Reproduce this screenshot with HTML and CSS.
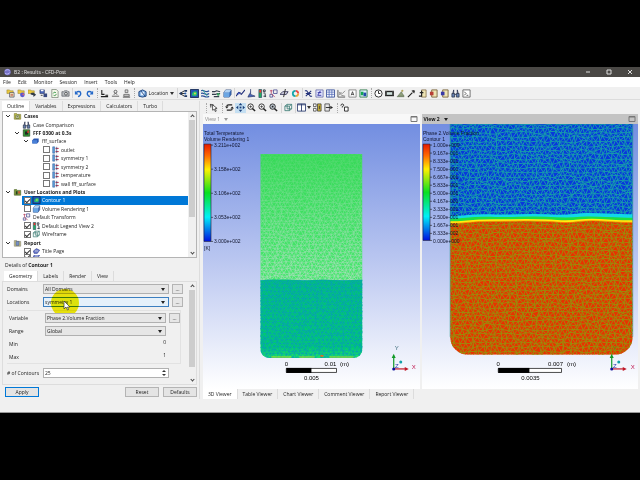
FILE: index.html
```html
<!DOCTYPE html>
<html lang="en">
<head>
<meta charset="utf-8">
<title>B2 : Results - CFD-Post</title>
<link rel="stylesheet" href="styles.css">
</head>
<body>
<svg class="sprite" aria-hidden="true">
  <symbol id="folder-y" viewBox="0 0 10 10"><path d="M1 1h3l1 1h3v3H1z" fill="#e8c840" stroke="#8a7420" stroke-width=".5"/><path d="M4 4h5v5H4z" fill="#f4eec0" stroke="#4a5068" stroke-width=".8"/><path d="M5 6h3M5 7.500h3" stroke="#b03030" stroke-width=".7"/></symbol>
  <symbol id="folder-b" viewBox="0 0 10 10"><path d="M1 1h3l1 1h3v3H1z" fill="#e8c840" stroke="#8a7420" stroke-width=".5"/><circle cx="6" cy="6.500" r="2.600" fill="#5a58d0"/><circle cx="7" cy="6" r="1" fill="#e06070"/></symbol>
  <symbol id="folder-k" viewBox="0 0 10 10"><path d="M0 1h3l1 1h3v3H0z" fill="#e8c840" stroke="#8a7420" stroke-width=".5"/><path d="M6 4l3 2.500L6 9V7L3 6V4.500z" fill="#333b48"/></symbol>
  <symbol id="save" viewBox="0 0 10 10"><path d="M1 1h5v4H1z" fill="#4a66b8" stroke="#26335e" stroke-width=".6"/><path d="M2 1h3v1.500H2z" fill="#fff"/><path d="M5 5h4v4H5z" fill="#3a4a80"/><path d="M2 7h2" stroke="#333"/></symbol>
  <symbol id="refresh-doc" viewBox="0 0 10 10"><path d="M2 .5h5l2 2v7H2z" fill="#f4f7ea" stroke="#60705c" stroke-width=".7"/><path d="M3.500 5a2 2 0 0 1 3-1M7 5.500a2 2 0 0 1-3 1.500" fill="none" stroke="#2c9140" stroke-width="1"/></symbol>
  <symbol id="camera" viewBox="0 0 10 10"><path d="M1 3h2l1-1h3l1 1h1v5H1z" fill="#b8bcc0" stroke="#4c5056" stroke-width=".7"/><circle cx="5.500" cy="5.300" r="1.500" fill="#eee" stroke="#222" stroke-width=".7"/></symbol>
  <symbol id="undo" viewBox="0 0 10 10"><path d="M2.500 4c2-2 5-1.500 5 1 0 2-1.500 3-3 3.500" fill="none" stroke="#2468c8" stroke-width="1.500"/><path d="M1 2v4h4z" fill="#2468c8"/></symbol>
  <symbol id="redo" viewBox="0 0 10 10"><path d="M7.500 4c-2-2-5-1.500-5 1 0 2 1.500 3 3 3.500" fill="none" stroke="#2468c8" stroke-width="1.500"/><path d="M9 2v4H5z" fill="#2468c8"/></symbol>
  <symbol id="probe" viewBox="0 0 10 10"><path d="M2 1v5h3M1 8.500h8M6 7h3" fill="none" stroke="#222" stroke-width="1.200"/></symbol>
  <symbol id="stamp" viewBox="0 0 10 10"><circle cx="5" cy="3" r="1.600" fill="none" stroke="#555"/><path d="M3 6l2-1 2 1M1 8h8" fill="none" stroke="#555"/></symbol>
  <symbol id="stamp2" viewBox="0 0 10 10"><path d="M3.500 1h3v3h-3zM2 6h6v2H2z" fill="#ddd" stroke="#555" stroke-width=".8"/><path d="M1 9h8" stroke="#444"/></symbol>
  <symbol id="location" viewBox="0 0 10 10"><path d="M1 3l4-2 4 2v5L5 9 1 8z" fill="#75a9df" stroke="#173d7a" stroke-width="1"/><path d="M3 3h4v4H3z" fill="#e7f1ff"/><path d="M3 2l5 6" stroke="#173d7a"/></symbol>
  <symbol id="vector" viewBox="0 0 10 10"><path d="M1 5l5-3M1 5l5 3M1 5h6" fill="none" stroke="#222" stroke-width="1"/><path d="M0 5l3-2v4zM6 1h3v2H6zM6 7h3v2H6z" fill="#223a66"/><circle cx="7" cy="5" r="1.200" fill="#2a63b5"/></symbol>
  <symbol id="contour" viewBox="0 0 10 10"><path d="M.5.5h9v9h-9z" fill="#2454b0" stroke="#152a55"/><path d="M2 7c0-5 6-6 6-2S4 8 2 7z" fill="#27bd72"/><circle cx="5.500" cy="5" r="1" fill="#f0e040"/></symbol>
  <symbol id="stream" viewBox="0 0 10 10"><path d="M0 2c3-2 5 3 9 0M0 5c3-2 5 3 9 0M0 8c3-2 5 3 9 0" fill="none" stroke="#274f97" stroke-width="1.300"/><path d="M2 1l5 7" stroke="#2ca69a"/></symbol>
  <symbol id="particle" viewBox="0 0 10 10"><path d="M0 3h3l2-1 4 1M0 6h4l2-1h3M2 8.500h6" fill="none" stroke="#333f4d" stroke-width="1.300"/><circle cx="7" cy="6" r="1.500" fill="#38a05e"/></symbol>
  <symbol id="cube" viewBox="0 0 10 10"><path d="M1 4l2-3h6v5L7 9H1z" fill="#3e71bd" stroke="#1d3c76" stroke-width=".7"/><path d="M1 4h6v5H1z" fill="#6ba6e3"/><path d="M1 4l2-3h6L7 4z" fill="#b0d1f2"/></symbol>
  <symbol id="curve" viewBox="0 0 10 10"><path d="M0 8l3-4 3 2 4-5M1 5l4-1" fill="none" stroke="#1e2c79" stroke-width="1.200"/><circle cx="3" cy="5" r="1" fill="#4461d0"/></symbol>
  <symbol id="pin" viewBox="0 0 10 10"><path d="M4 0v6l5 2-8 1 2-4" fill="#4867bd" stroke="#222d60" stroke-width=".7"/></symbol>
  <symbol id="legend" viewBox="0 0 10 10"><path d="M1 .5h3v9H1z" fill="#20ae60" stroke="#263e60" stroke-width=".7"/><path d="M1.500 1h2v3h-2z" fill="#ef3434"/><path d="M6 1h2v2H6zM6 4.500h2M6 8h3M8 5v4" fill="none" stroke="#24333c" stroke-width="1"/></symbol>
  <symbol id="xform" viewBox="0 0 10 10"><path d="M5 1h4v4H5zM1 6h3v3H1z" fill="#eee" stroke="#3b3c87" stroke-width=".8"/><path d="M1 2h3M2.500 1v4l4 4" fill="none" stroke="#b84563" stroke-width=".9"/></symbol>
  <symbol id="clip" viewBox="0 0 10 10"><path d="M0 6l3-3h6L7 6z" fill="#d8d8e8" stroke="#25254c" stroke-width=".9"/><path d="M6 0L4 9" stroke="#222"/></symbol>
  <symbol id="ring" viewBox="0 0 10 10"><path d="M5 2a3 3 0 0 1 3 3" fill="none" stroke="#ec4545" stroke-width="2"/><path d="M8 5a3 3 0 0 1-3 3" fill="none" stroke="#e7a63d" stroke-width="2"/><path d="M5 8a3 3 0 0 1 0-6" fill="none" stroke="#13a6ad" stroke-width="2"/></symbol>
  <symbol id="var" viewBox="0 0 10 10"><path d="M1 2h2l4 6h2M8 2L2 8M2 5h6" fill="none" stroke="#213079" stroke-width="1.200"/></symbol>
  <symbol id="expr" viewBox="0 0 10 10"><path d="M1 1h8v8H1z" fill="#e1e4ff" stroke="#4a4f95" stroke-width=".7"/><path d="M6 2L3 7h4M3 4h4" fill="none" stroke="#3232a0"/></symbol>
  <symbol id="table" viewBox="0 0 10 10"><path d="M.5 1h9v8h-9z" fill="#f7f9ff" stroke="#3b529c"/><path d="M1 3.500h8M1 6h8M3.500 1v8M6.500 1v8" stroke="#4b64b4" stroke-width=".8"/></symbol>
  <symbol id="chart" viewBox="0 0 10 10"><path d="M1 1v8h8" fill="none" stroke="#555"/><path d="M2 7l2-3 2 1 3-3M2 3l3 4 4 1" fill="none" stroke="#898989"/></symbol>
  <symbol id="comment" viewBox="0 0 10 10"><path d="M1 1h8v8H1z" fill="#fff" stroke="#858585"/><path d="M3.500 7L5 3l1.500 4M4 6h2" fill="none" stroke="#222" stroke-width=".8"/></symbol>
  <symbol id="figure" viewBox="0 0 10 10"><path d="M1 1h8v8H1z" fill="#e4f3ff" stroke="#357f4f"/><path d="M2 3h3v4H2z" fill="#12a850"/><path d="M5 4h3v4H5z" fill="#234bac"/></symbol>
  <symbol id="clock" viewBox="0 0 10 10"><circle cx="5" cy="5" r="4" fill="#fff" stroke="#222"/><path d="M5 2v3h2" fill="none" stroke="#222"/></symbol>
  <symbol id="film" viewBox="0 0 10 10"><path d="M0 2h10v6H0z" fill="#222"/><path d="M2 3.500h6v3H2z" fill="#cfe0dc"/><path d="M1 2v6M9 2v6" stroke="#999" stroke-dasharray="1 1"/></symbol>
  <symbol id="walk" viewBox="0 0 10 10"><path d="M1 8.500h8" stroke="#718064"/><path d="M2 8l4-5 1 2 2 3z" fill="#8fa07c" stroke="#66755a" stroke-width=".8"/><circle cx="7" cy="2" r="1.200" fill="#b3a45c"/></symbol>
  <symbol id="wand" viewBox="0 0 10 10"><path d="M1 9l5-5" stroke="#222" stroke-width="1.200"/><path d="M5 2l3 3 1-3-2-1z" fill="#333"/></symbol>
  <symbol id="pick" viewBox="0 0 10 10"><path d="M4 1h5v8H4z" fill="#eee4b4" stroke="#7c6540" stroke-width=".8"/><path d="M4 2v6H1M2 4h4" fill="none" stroke="#222" stroke-width="1.300"/></symbol>
  <symbol id="doc-r" viewBox="0 0 10 10"><path d="M3 1h6v8H3z" fill="#eee4b4" stroke="#7c6540"/><path d="M1 3h4v4H1z" fill="#b83e36"/></symbol>
  <symbol id="doc-b" viewBox="0 0 10 10"><path d="M3 1h6v8H3z" fill="#eee4b4" stroke="#7c6540"/><path d="M1 3h4v4H1z" fill="#3838a6"/></symbol>
  <symbol id="binoc" viewBox="0 0 10 10"><path d="M1 5h3v4H1zM6 5h3v4H6z" fill="#6681b2" stroke="#222c40" stroke-width=".8"/><path d="M2 5l1-4v4M8 5L7 1v4M4 6h2" fill="none" stroke="#333c58"/></symbol>
  <symbol id="console" viewBox="0 0 10 10"><path d="M1 1h8v8H1z" fill="#fff" stroke="#444" stroke-width=".8"/><path d="M2.500 3l2 2-2 2M5 7h2" fill="none" stroke="#222" stroke-width=".8"/></symbol>
  <symbol id="select" viewBox="0 0 10 10"><path d="M1 2h4M2 1v4" stroke="#333"/><path d="M4 2l5 4H7l1 3-1 .5L6 7 4 8z" fill="#fff" stroke="#222" stroke-width=".8"/></symbol>
  <symbol id="rotate" viewBox="0 0 10 10"><path d="M8 2H4a2 2 0 0 0-2 2M2 8h4a2 2 0 0 0 2-2" fill="none" stroke="#222" stroke-width="1.400"/><path d="M0 4h4L2 6zM6 6h4L8 4z" fill="#222"/></symbol>
  <symbol id="pan" viewBox="0 0 10 10"><path d="M5 0l2 2.500H3zM5 10l2-2.500H3zM0 5l2.500-2v4zM10 5L7.500 3v4z" fill="#173c78"/><path d="M4 4h2v2H4z" fill="#173c78"/></symbol>
  <symbol id="zoom" viewBox="0 0 10 10"><circle cx="4" cy="4" r="3" fill="#fff" stroke="#222"/><path d="M6 6l3 3" stroke="#222" stroke-width="1.600"/><path d="M2.500 4h3M4 2.500v3" stroke="#333" stroke-width=".8"/></symbol>
  <symbol id="zoom-fit" viewBox="0 0 10 10"><circle cx="4" cy="4" r="3" fill="#c7d0da" stroke="#222"/><path d="M6 6l3 3" stroke="#222" stroke-width="1.600"/><path d="M3 3h2v2H3z" fill="#222"/></symbol>
  <symbol id="wire" viewBox="0 0 10 10"><path d="M1 3.500h5v5H1zM3.500 1.500h5v5h-5zM1 3.500l2.500-2M6 8.500l2.500-2M6 3.500l2.500-2" fill="none" stroke="#3a7c74" stroke-width=".9"/></symbol>
  <symbol id="split" viewBox="0 0 10 10"><path d="M.5 1h9v8h-9z" fill="#fff" stroke="#2f3f70"/><path d="M5 1v8M1 2h8" stroke="#2f3f70"/></symbol>
  <symbol id="sync" viewBox="0 0 10 10"><path d="M.5 1h3v3h-3zM.5 6h3v3h-3z" fill="#fff" stroke="#333" stroke-width=".8"/><path d="M5 1h4v8H5z" fill="#d4bb3b" stroke="#333" stroke-width=".8"/><path d="M7 3v4" stroke="#333"/></symbol>
  <symbol id="sync2" viewBox="0 0 10 10"><path d="M1 1h5v8H1z" fill="#e6e6e6" stroke="#333" stroke-width=".8"/><path d="M2 5h5" stroke="#222"/><path d="M7 3l3 2-3 2z" fill="#222"/></symbol>
  <symbol id="help" viewBox="0 0 10 10"><path d="M1 3c0-3 4-2 3 0L2.500 4v1" fill="none" stroke="#222"/><path d="M5 4.500h4V9H5z" fill="#fff" stroke="#222"/></symbol>
  <symbol id="cases" viewBox="0 0 10 10"><path d="M1 2h3l1 1h4v6H1z" fill="#c6c452" stroke="#6f6c24" stroke-width=".7"/><path d="M3 4h4v4H3z" fill="#eef0c2" stroke="#465a2a" stroke-width=".8"/><path d="M4 6h2" stroke="#222"/></symbol>
  <symbol id="plots" viewBox="0 0 10 10"><path d="M1 2h3l1 1h4v6H1z" fill="#7c9a3c" stroke="#45591e" stroke-width=".7"/><path d="M3 4h2v4H3z" fill="#283f23"/><path d="M6 4h2v3H6z" fill="#d34936"/></symbol>
  <symbol id="run" viewBox="0 0 10 10"><path d="M1 1h8v8H1z" fill="#2f9a35" stroke="#345329"/><path d="M3 3h4v4H3z" fill="#202820"/><path d="M6 2h2v3H6z" fill="#d23c2e"/></symbol>
  <symbol id="report" viewBox="0 0 10 10"><path d="M1 2h3l1 1h4v6H1z" fill="#d4cc7c" stroke="#777" stroke-width=".7"/><path d="M3 3h4v5H3z" fill="#7890c0" stroke="#42537c" stroke-width=".6"/></symbol>
  <symbol id="domain" viewBox="0 0 10 10"><path d="M1 4l2-2h6v4L7 8H1z" fill="#2a58b2"/><path d="M1 4h6v4H1z" fill="#4a81d8"/></symbol>
  <symbol id="boundary" viewBox="0 0 10 10"><path d="M1.500 1h2.500v8H1.500z" fill="#5f9fdd" stroke="#23528e" stroke-width=".6"/><path d="M5 3h4M5 7h4" stroke="#b82a44" stroke-width="1.200"/><path d="M6.500 1v8" stroke="#273e72" stroke-width=".8"/></symbol>
  <symbol id="page" viewBox="0 0 10 10"><path d="M1 5l4-3 4 2-3 4H2z" fill="#6576cc" stroke="#353f88" stroke-width=".7"/><path d="M3 5h4" stroke="#ddd"/></symbol>
  <symbol id="chev" viewBox="0 0 8 8"><path d="M2 3l2 2 2-2" fill="none" stroke="#333" stroke-width="1"/></symbol>
  <symbol id="max" viewBox="0 0 8 8"><path d="M1 1.500h6v5H1zM1 2h6" fill="none" stroke="#777" stroke-width="1"/></symbol>
</svg>

<main class="window">
  <header class="titlebar">
    <svg class="icon" viewBox="0 0 10 10" aria-hidden="true"><circle cx="5" cy="5" r="4" fill="#7772c8"/><path d="M2 4c2-3 5-2 6 0M2 6.500c2 2 5 1 6-1" fill="none" stroke="#c8c8ff"/></svg>
    <h1>B2 : Results - CFD-Post</h1>
    <div class="winbtns">
      <button aria-label="Minimize"><svg viewBox="0 0 8 8"><path d="M2 4h4" stroke="#ddd"/></svg></button>
      <button aria-label="Maximize"><svg viewBox="0 0 8 8"><path d="M2 2h4v4H2z" fill="none" stroke="#ddd"/></svg></button>
      <button aria-label="Close"><svg viewBox="0 0 8 8"><path d="M2 2l4 4M6 2L2 6" stroke="#ddd"/></svg></button>
    </div>
  </header>
  <nav class="menubar">
    <button>File</button><button>Edit</button><button>Monitor</button><button>Session</button><button>Insert</button><button>Tools</button><button>Help</button>
  </nav>
  <div class="toolbar" role="toolbar" aria-label="Main">
    <div class="group">
      <button aria-label="Load results"><svg><use href="#folder-y"/></svg></button>
      <button aria-label="Load state"><svg><use href="#folder-b"/></svg></button>
      <button aria-label="Save state as"><svg><use href="#folder-k"/></svg></button>
      <button aria-label="Save"><svg><use href="#save"/></svg></button>
      <button aria-label="Refresh"><svg><use href="#refresh-doc"/></svg></button>
      <button aria-label="Save picture"><svg><use href="#camera"/></svg></button>
    </div>
    <div class="group sep">
      <button aria-label="Undo"><svg><use href="#undo"/></svg></button>
      <button aria-label="Redo"><svg><use href="#redo"/></svg></button>
    </div>
    <div class="group grip">
      <button aria-label="Probe"><svg><use href="#probe"/></svg></button>
      <button aria-label="Function"><svg><use href="#stamp"/></svg></button>
      <button aria-label="Macro"><svg><use href="#stamp2"/></svg></button>
    </div>
    <div class="group grip">
      <button class="location"><svg><use href="#location"/></svg>Location<i class="caret"></i></button>
    </div>
    <div class="group sep">
      <button aria-label="Vector"><svg><use href="#vector"/></svg></button>
      <button aria-label="Contour"><svg><use href="#contour"/></svg></button>
      <button aria-label="Streamline"><svg><use href="#stream"/></svg></button>
      <button aria-label="Particle track"><svg><use href="#particle"/></svg></button>
      <button aria-label="Volume rendering"><svg><use href="#cube"/></svg></button>
    </div>
    <div class="group sep">
      <button aria-label="Text"><svg><use href="#curve"/></svg></button>
      <button aria-label="Coordinate frame"><svg><use href="#pin"/></svg></button>
      <button aria-label="Legend"><svg><use href="#legend"/></svg></button>
      <button aria-label="Instance transform"><svg><use href="#xform"/></svg></button>
      <button aria-label="Clip plane"><svg><use href="#clip"/></svg></button>
      <button aria-label="Color map"><svg><use href="#ring"/></svg></button>
    </div>
    <div class="group sep">
      <button aria-label="Variable"><svg><use href="#var"/></svg></button>
      <button aria-label="Expression"><svg><use href="#expr"/></svg></button>
      <button aria-label="Table"><svg><use href="#table"/></svg></button>
      <button aria-label="Chart"><svg><use href="#chart"/></svg></button>
      <button aria-label="Comment"><svg><use href="#comment"/></svg></button>
      <button aria-label="Figure"><svg><use href="#figure"/></svg></button>
    </div>
    <div class="group grip">
      <button aria-label="Timestep selector"><svg><use href="#clock"/></svg></button>
      <button aria-label="Animation"><svg><use href="#film"/></svg></button>
      <button aria-label="Quick editor"><svg><use href="#walk"/></svg></button>
      <button aria-label="Probe point"><svg><use href="#wand"/></svg></button>
      <button aria-label="Pick"><svg><use href="#pick"/></svg></button>
      <button aria-label="Report"><svg><use href="#doc-r"/></svg></button>
      <button aria-label="Publish"><svg><use href="#doc-b"/></svg></button>
      <button aria-label="Case compare"><svg><use href="#binoc"/></svg></button>
      <button aria-label="Command editor"><svg><use href="#console"/></svg></button>
    </div>
  </div>

  <div class="work">
    <section class="side">
      <nav class="tabs">
        <button class="on">Outline</button><button>Variables</button><button>Expressions</button><button>Calculators</button><button>Turbo</button>
      </nav>
      <div class="tree">
        <ul>
          <li class="l0 b"><svg class="chev"><use href="#chev"/></svg><svg class="icon"><use href="#cases"/></svg>Cases</li>
          <li class="l1 leaf"><svg class="icon"><use href="#binoc"/></svg>Case Comparison</li>
          <li class="l1 b"><svg class="chev"><use href="#chev"/></svg><svg class="icon"><use href="#run"/></svg>FFF 0300 at 0.3s</li>
          <li class="l2"><svg class="chev"><use href="#chev"/></svg><svg class="icon"><use href="#domain"/></svg>fff_surface</li>
          <li class="l3"><label><input type="checkbox"><svg class="icon"><use href="#boundary"/></svg>outlet</label></li>
          <li class="l3"><label><input type="checkbox"><svg class="icon"><use href="#boundary"/></svg>symmetry 1</label></li>
          <li class="l3"><label><input type="checkbox"><svg class="icon"><use href="#boundary"/></svg>symmetry 2</label></li>
          <li class="l3"><label><input type="checkbox"><svg class="icon"><use href="#boundary"/></svg>temperature</label></li>
          <li class="l3"><label><input type="checkbox"><svg class="icon"><use href="#boundary"/></svg>wall fff_surface</label></li>
          <li class="l0 b"><svg class="chev"><use href="#chev"/></svg><svg class="icon"><use href="#plots"/></svg>User Locations and Plots</li>
          <li class="check sel"><label><input type="checkbox" checked><svg class="icon"><use href="#contour"/></svg>Contour 1</label></li>
          <li class="check"><label><input type="checkbox"><svg class="icon"><use href="#cube"/></svg>Volume Rendering 1</label></li>
          <li class="l1 leaf"><svg class="icon"><use href="#xform"/></svg>Default Transform</li>
          <li class="check"><label><input type="checkbox" checked><svg class="icon"><use href="#legend"/></svg>Default Legend View 2</label></li>
          <li class="check"><label><input type="checkbox" checked><svg class="icon"><use href="#wire"/></svg>Wireframe</label></li>
          <li class="l0 b"><svg class="chev"><use href="#chev"/></svg><svg class="icon"><use href="#report"/></svg>Report</li>
          <li class="check"><label><input type="checkbox" checked><svg class="icon"><use href="#page"/></svg>Title Page</label></li>
          <li class="check"><label><input type="checkbox" checked aria-label="Next report item"><svg class="icon"><use href="#page"/></svg></label></li>
        </ul>
        <div class="scroll tree-scroll"><i class="up"></i><i class="thumb"></i><i class="down"></i></div>
      </div>
      <h2>Details of <b>Contour 1</b></h2>
      <nav class="tabs sub">
        <button class="on">Geometry</button><button>Labels</button><button>Render</button><button>View</button>
      </nav>
      <form class="details">
        <div class="fields">
          <div class="row"><label for="dom">Domains</label><span class="combo"><select id="dom"><option>All Domains</option></select></span><button type="button" class="more">...</button></div>
          <div class="row"><label for="loc">Locations</label><span class="combo focus"><select id="loc"><option>symmetry 1</option></select>
            <svg class="pointer" viewBox="0 0 30 30" aria-hidden="true"><circle cx="15" cy="15" r="14" fill="#f5ee0c"/></svg>
            <svg class="arrow" viewBox="0 0 8 11" aria-hidden="true"><path d="M1 1v8l2-2 1.500 3 1-.5L4.500 7H7z" fill="#fff" stroke="#333" stroke-width=".7"/></svg></span><button type="button" class="more">...</button></div>
          <div class="box">
            <div class="row"><label for="var-f">Variable</label><span class="combo"><select id="var-f"><option>Phase 2.Volume Fraction</option></select></span><button type="button" class="more">...</button></div>
            <div class="row"><label for="rng">Range</label><span class="combo"><select id="rng"><option>Global</option></select></span><span class="gap"></span></div>
            <div class="row"><span class="lab">Min</span><output>0</output><span class="gap"></span></div>
            <div class="row"><span class="lab">Max</span><output>1</output><span class="gap"></span></div>
          </div>
          <div class="row"><label for="num"># of Contours</label><span class="spin"><input id="num" type="text" value="25"></span><span class="gap"></span></div>
        </div>
        <div class="scroll form-scroll"><i class="up"></i><i class="thumb"></i><i class="down"></i></div>
      </form>
      <div class="actions"><button class="primary">Apply</button><button>Reset</button><button>Defaults</button></div>
    </section>

    <section class="viewer">
      <div class="toolbar second" role="toolbar" aria-label="Viewer">
        <div class="group grip"><button aria-label="Select"><svg><use href="#select"/></svg></button></div>
        <div class="group grip">
          <button aria-label="Rotate"><svg><use href="#rotate"/></svg></button>
          <button aria-label="Pan" class="active"><svg><use href="#pan"/></svg></button>
          <button aria-label="Zoom"><svg><use href="#zoom"/></svg></button>
          <button aria-label="Zoom box"><svg><use href="#zoom"/></svg></button>
          <button aria-label="Fit view"><svg><use href="#zoom-fit"/></svg></button>
        </div>
        <div class="group sep wide"><button aria-label="Highlight"><svg><use href="#wire"/></svg></button></div>
        <div class="group sep">
          <button aria-label="Viewport layout" class="drop"><svg><use href="#split"/></svg><i class="caret"></i></button>
          <button aria-label="Sync cameras"><svg><use href="#sync"/></svg></button>
          <button aria-label="Sync visibility"><svg><use href="#sync2"/></svg></button>
        </div>
        <div class="group grip"><button aria-label="Viewer help"><svg><use href="#help"/></svg></button></div>
      </div>
      <div class="views">
        <article class="view">
          <header>View 1 <i class="caret"></i><svg class="maxi"><use href="#max"/></svg></header>
          <svg class="scene" viewBox="0 0 216 264" preserveAspectRatio="xMinYMin slice" role="img" aria-label="Total Temperature volume rendering">
            <defs>
              <linearGradient id="rainbow" x2="0" y2="1"><stop offset="0" stop-color="#e81800"/><stop offset=".12" stop-color="#ff6a00"/><stop offset=".26" stop-color="#fff000"/><stop offset=".5" stop-color="#08e020"/><stop offset=".75" stop-color="#00f0f8"/><stop offset="1" stop-color="#0010e0"/></linearGradient>
              <linearGradient id="upper" x2="0" y2="1"><stop offset="0" stop-color="#36d957"/><stop offset="1" stop-color="#48e86e"/></linearGradient>
              <linearGradient id="lower" x2="0" y2="1"><stop offset="0" stop-color="#00c07c"/><stop offset=".85" stop-color="#00cc70"/><stop offset="1" stop-color="#20e860"/></linearGradient>
              <linearGradient id="fade" x2="0" y2="1"><stop offset="0" stop-color="#333"/><stop offset="1" stop-color="#fff"/></linearGradient>
              <mask id="fade-mask"><path d="M57 30h102v126H57z" fill="url(#fade)"/></mask>
              <clipPath id="tank1"><path d="M57 30h102v194a9 9 0 0 1-9 9H66a9 9 0 0 1-9-9z"/></clipPath>
            </defs>
            <g clip-path="url(#tank1)">
              <path d="M57 30h102v126H57z" fill="url(#upper)"/>
              <g mask="url(#fade-mask)"><path class="mesh" data-box="57,30,102,126,4" stroke="#b4dcc4" stroke-width=".6"/></g>
              <path d="M57 156l8-1 20 0 15 1 20-1 20 1 19-1v79H57z" fill="url(#lower)"/>
              <path class="mesh" data-box="57,156,102,78,4" stroke="#08a2b4" stroke-width=".7"/>
              <path d="M68 232h20M96 232h15M126 232h24" stroke="#b6e020" stroke-width="1"/><path d="M117 231h3" stroke="#e06a20" stroke-width="1.500"/>
            </g>
            <g class="small"><text x="1" y="11">Total Temperature</text><text x="1" y="17">Volume Rendering 1</text>
              <text x="11" y="23">3.211e+002</text><text x="11" y="47">3.158e+002</text><text x="11" y="71">3.106e+002</text><text x="11" y="95">3.053e+002</text><text x="11" y="119">3.000e+002</text><text x="1" y="126">[K]</text></g>
            <path d="M1 20h7v97H1z" fill="url(#rainbow)" stroke="#223" stroke-width=".6"/>
            <path d="M8 21h2M8 45h2M8 69h2M8 93h2M8 117h2" stroke="#222" stroke-width=".6"/>
            <path d="M83 243.500h50v4H83z" fill="#fff" stroke="#222" stroke-width=".8"/><path d="M83 243h25v5H83z"/>
            <g class="scale"><text x="83" y="241">0</text><text x="127" y="241">0.01</text><text x="141" y="241">(m)</text><text x="108" y="255">0.005</text></g>
            <path d="M190 244v-12" stroke="#129a28" stroke-width="1.200"/><path d="M188 233l2-4 2 4z" fill="#129a28"/><path d="M190 244h12" stroke="#c01828" stroke-width="1.200"/><path d="M201 242l4 2-4 2z" fill="#c01828"/><circle cx="190" cy="244" r="1.500" fill="#101098"/><circle cx="197" cy="237" r="1.500" fill="#12a0a8"/>
            <g class="scale"><text x="193" y="225" fill="#386878">Y</text><text x="210" y="244" fill="#c01850">X</text><text x="193" y="243" fill="#2030a8">Z</text></g>
          </svg>
        </article>
        <article class="view current">
          <header>View 2 <i class="caret"></i><svg class="maxi"><use href="#max"/></svg></header>
          <svg class="scene" viewBox="0 0 216 264" preserveAspectRatio="xMinYMin slice" role="img" aria-label="Phase 2 volume fraction contour">
            <defs><clipPath id="tank2"><path d="M28 0h182v212a18 18 0 0 1-18 18H46a18 18 0 0 1-18-18z"/></clipPath></defs>
            <g clip-path="url(#tank2)">
              <path d="M28 0h182v96H28z" fill="#0838dc"/>
              <path class="mesh" data-box="28,0,182,94,5" stroke="#18a2a8" stroke-width=".9"/>
              <path d="M28 96h182v136H28z" fill="#e83200"/>
              <path class="mesh" data-box="28,96,182,136,5" stroke="#98900c" stroke-width=".9"/>
              <path d="M28 94c15 0 20-3 40-2s35-1 55 0 25 0 35-1 30 1 52 1" fill="none" stroke="#10d8e8" stroke-width="4"/>
              <path d="M28 96c15 0 20-3 40-2s35-1 55 0 25 1 35 0 30 1 52 1" fill="none" stroke="#20e040" stroke-width="3"/>
              <path d="M28 98c15 0 20-2 40-2s35-1 55 0 20 2 35 0 30 1 52 1" fill="none" stroke="#fff010" stroke-width="2"/>
              <path d="M28 99c15 0 20-2 40-2s35-1 55 0 20 2 35 0 30 1 52 1" fill="none" stroke="#ff9000" stroke-width=".7"/>
            </g>
            <path d="M28 0v212M210 0v212" stroke="#239b8b" stroke-width=".5"/>
            <g class="small"><text x="1" y="11">Phase 2.Volume Fraction</text><text x="1" y="17">Contour 1</text>
              <text x="11" y="23">1.000e+000</text><text x="11" y="31">9.167e-001</text><text x="11" y="39">8.333e-001</text><text x="11" y="47">7.500e-001</text><text x="11" y="55">6.667e-001</text><text x="11" y="63">5.833e-001</text><text x="11" y="71">5.000e-001</text><text x="11" y="79">4.167e-001</text><text x="11" y="87">3.333e-001</text><text x="11" y="95">2.500e-001</text><text x="11" y="103">1.667e-001</text><text x="11" y="111">8.333e-002</text><text x="11" y="119">0.000e+000</text></g>
            <path d="M1 20h7v96H1z" fill="url(#rainbow)" stroke="#223" stroke-width=".6"/>
            <path d="M8 21h2M8 29h2M8 37h2M8 45h2M8 53h2M8 61h2M8 69h2M8 77h2M8 85h2M8 93h2M8 101h2M8 109h2M8 116h2" stroke="#222" stroke-width=".6"/>
            <path d="M76 243.500h63v4H76z" fill="#fff" stroke="#222" stroke-width=".8"/><path d="M76 243h31v5H76z"/>
            <g class="scale"><text x="76" y="241">0</text><text x="133" y="241">0.007</text><text x="149" y="241">(m)</text><text x="108" y="255">0.0035</text></g>
            <path d="M189 244v-12" stroke="#129a28" stroke-width="1.200"/><path d="M187 233l2-4 2 4z" fill="#129a28"/><path d="M189 244h12" stroke="#c01828" stroke-width="1.200"/><path d="M200 242l4 2-4 2z" fill="#c01828"/><circle cx="189" cy="244" r="1.500" fill="#101098"/><circle cx="196" cy="237" r="1.500" fill="#12a0a8"/>
            <g class="scale"><text x="192" y="225" fill="#49a018">Y</text><text x="210" y="244" fill="#c01850">X</text><text x="192" y="243" fill="#2030a8">Z</text></g>
          </svg>
        </article>
      </div>
      <nav class="tabs bottom">
        <button class="on">3D Viewer</button><button>Table Viewer</button><button>Chart Viewer</button><button>Comment Viewer</button><button>Report Viewer</button>
      </nav>
    </section>
  </div>
</main>
<script src="mesh.js"></script>
</body>
</html>
```

FILE: mesh.js
```js
// Fills every .mesh path with an irregular triangular grid over its data-box (x, y, width, height, step).
let seed = 7;
function rand() {
  seed = (seed * 16807) % 2147483647;
  return seed / 2147483647;
}
document.querySelectorAll('.mesh').forEach(function (path) {
  const [x, y, w, h, step] = path.dataset.box.split(',').map(Number);
  const rowH = step * 0.87;
  const rows = Math.ceil(h / rowH) + 1;
  const cols = Math.ceil(w / step) + 2;
  const pts = [];
  for (let r = 0; r < rows; r++) {
    pts.push([]);
    for (let c = 0; c < cols; c++) {
      const px = x + (c - (r % 2) / 2) * step + (rand() - 0.5) * step * 0.6;
      const py = Math.max(y, y + r * rowH + (rand() - 0.5) * step * 0.6);
      pts[r].push(px.toFixed(1) + ' ' + Math.min(py, y + h).toFixed(1));
    }
  }
  let d = '';
  for (let r = 0; r < rows; r++) {
    d += 'M' + pts[r].join('L');
    if (r + 1 === rows) break;
    for (let c = 0; c < cols; c++) {
      const n = c + (r % 2 ? -1 : 1);
      d += 'M' + pts[r][c] + 'L' + pts[r + 1][c];
      if (pts[r + 1][n]) d += 'M' + pts[r][c] + 'L' + pts[r + 1][n];
    }
  }
  path.setAttribute('d', d);
});
```

FILE: styles.css
```css
* { box-sizing: border-box; }
body {
  margin: 0;
  height: 100vh;
  padding: 67px 0;
  background: #000;
  color: #1c1c1c;
  font: 5px/8px "Open Sans", "Noto Sans", sans-serif;
}
.sprite { display: none; }
button, select, input { font: inherit; color: inherit; margin: 0; padding: 0; border: 0; background: none; border-radius: 0; }
svg { display: block; }
.icon { width: 9px; height: 8px; flex: none; }
.caret { border: 2px solid transparent; border-top: 3px solid #333; border-bottom: 0; }

.window { height: 100%; display: flex; flex-direction: column; background: #f0f0f0; border-bottom: 1px solid #999; }
.titlebar { flex: none; height: 10px; display: flex; align-items: center; gap: 2px; padding: 0 0 0 3px; background: #4a4845; color: #e8e8e8; }
.titlebar h1 { margin: 0; font-size: 5px; font-weight: 400; }
.winbtns { margin-left: auto; display: flex; }
.winbtns button { width: 21px; display: flex; justify-content: center; }
.winbtns svg { width: 8px; height: 8px; }
.menubar { flex: none; height: 10px; display: flex; align-items: center; gap: 7px; padding: 0 3px; background: #fff; }

.toolbar { flex: none; height: 13px; display: flex; align-items: center; padding-left: 5px; border-bottom: 1px solid #dcdcdc; }
.group { display: flex; align-items: center; }
.group button { width: 11px; height: 10px; display: flex; align-items: center; justify-content: center; }
.group svg { width: 9px; height: 9px; flex: none; }
.group.sep { border-left: 1px solid #d4d4d4; margin-left: 1px; }
.group.grip { border-left: 1px dotted #aaa; margin-left: 2px; padding-left: 1px; }
.group.sep.wide { margin-left: 2px; padding-left: 1px; }
.group .location { width: 40px; gap: 2px; }
.group .drop { width: 16px; gap: 1px; }
.group .active { background: #c4dff2; }

.work { flex: 1; min-height: 0; display: flex; gap: 3px; padding: 1px 2px 13px 0; }
.side { width: 200px; flex: none; display: flex; flex-direction: column; border-right: 1px solid #ddd; padding: 0 2px; }
.tabs { flex: none; display: flex; }
.tabs button { padding: 0 5px; height: 10px; border-right: 1px solid #dcdcdc; }
.tabs .on { background: #fff; }
.tabs.sub { padding-left: 2px; }
.tree { flex: 147 1 0; min-height: 0; display: flex; border: 1px solid #b4b4b4; background: #fff; }
.tree ul { flex: 1; margin: 0; padding: 0; list-style: none; overflow: hidden; display: grid; grid-template-rows: repeat(17, 1fr) 2px; }
.tree li, .tree li label { display: flex; align-items: center; gap: 2px; white-space: nowrap; min-height: 0; overflow: hidden; }
.tree li.b { font-weight: 700; }
.chev { width: 8px; height: 8px; margin-right: -1px; flex: none; }
.l0 { padding-left: 1px; }
.l1 { padding-left: 10px; }
.l1.leaf { padding-left: 19px; }
.l2 { padding-left: 19px; }
.l3 { padding-left: 40px; }
.tree .l3 label, .tree .check label { gap: 1px; }
.tree .check { margin-left: 19px; padding-left: 2px; }
.tree .sel { background: #0078d7; color: #fff; }
input[type="checkbox"] { appearance: none; width: 7px; height: 7px; border: 1px solid #777; background: #fff; flex: none; display: grid; place-items: center; }
input[type="checkbox"]:checked::after { content: ""; width: 4px; height: 2px; border: solid #333; border-width: 0 0 1px 1px; transform: rotate(-45deg); }
.scroll { width: 8px; flex: none; display: flex; flex-direction: column; align-items: center; background: #f0f0f0; }
.scroll .up, .scroll .down { width: 3px; height: 3px; border: solid #444; border-width: 1px 0 0 1px; transform: rotate(45deg); margin: 3px 0 2px; }
.scroll .down { transform: rotate(225deg); margin: auto 0 3px; }
.scroll .thumb { width: 6px; background: #cdcdcd; }
.tree-scroll .thumb { height: 67%; }
.form-scroll .thumb { height: 75%; }

.side h2 { flex: none; margin: 0; padding: 3px 3px 2px; font-size: 5px; font-weight: 400; }
.details { flex: 103 1 0; min-height: 0; display: flex; justify-content: space-between; border: 1px solid #ddd; margin: 0; }
.fields { width: 180px; padding: 0 0 0 4px; }
.row { display: flex; align-items: center; height: 13px; gap: 3px; }
.row label, .row .lab { width: 33px; flex: none; white-space: nowrap; }
.combo, .spin { position: relative; flex: 1; height: 10px; display: flex; border: 1px solid #b0b0b0; background: #e6e6e6; }
.combo select { appearance: none; width: 100%; padding: 0 1px; line-height: 8px; }
.combo::after { content: ""; position: absolute; right: 3px; top: 3px; border: 2px solid transparent; border-top: 3px solid #222; border-bottom: 0; pointer-events: none; }
.combo.focus { border-color: #3c7fc0; background: #e5f1fb; }
.more { width: 11px; height: 10px; border: 1px solid #b4b4b4; background: #e6e6e6; line-height: 6px; }
.gap { width: 11px; }
.row output { flex: 1; text-align: right; line-height: 8px; padding-bottom: 3px; }
.box { border: 1px solid #e2e2e2; border-left: 0; margin: 2px 2px 2px 0; padding-left: 2px; }
.spin { background: #fff; }
.spin input { width: 100%; padding: 0 1px; }
.spin::before, .spin::after { content: ""; position: absolute; right: 2px; border: 2px solid transparent; }
.spin::before { top: 1px; border-bottom: 2px solid #333; border-top: 0; }
.spin::after { bottom: 1px; border-top: 2px solid #333; border-bottom: 0; }
.pointer { position: absolute; left: 6px; top: -10px; width: 30px; height: 30px; mix-blend-mode: multiply; pointer-events: none; }
.arrow { position: absolute; left: 19px; top: 2px; width: 8px; height: 11px; z-index: 1; pointer-events: none; }
.actions { flex: none; display: flex; gap: 4px; padding: 2px 0 2px 3px; }
.actions button { width: 34px; height: 10px; border: 1px solid #b4b4b4; background: #e4e4e4; line-height: 8px; }
.actions .primary { margin-right: auto; border-color: #0078d7; }

.viewer { flex: 1; min-width: 0; display: flex; flex-direction: column; }
.second { padding-left: 0; border: 0; }
.second .group.grip { margin-left: 3px; }
.views { flex: 1; min-height: 0; display: flex; gap: 2px; }
.view { flex: 1; min-width: 0; display: flex; flex-direction: column; background: linear-gradient(#6d8ae0, #b8c5f0 52%, #fff); }
.view header { flex: none; height: 10px; display: flex; align-items: center; gap: 4px; padding: 0 2px; background: #f8f8f8; color: #888; }
.view .caret { border-top-color: #999; }
.view .maxi { width: 8px; height: 8px; margin-left: auto; }
.view.current header { background: #c3c3c3; color: #111; font-weight: 700; }
.view.current .caret { border-top-color: #222; }
.scene { flex: 1; min-height: 0; width: 100%; }
.mesh { fill: none; }
.small { font: 5px "Liberation Sans", sans-serif; fill: #10142c; }
.scale { font: 6px "Liberation Sans", sans-serif; text-anchor: middle; }
.bottom { margin-right: auto; }
```
